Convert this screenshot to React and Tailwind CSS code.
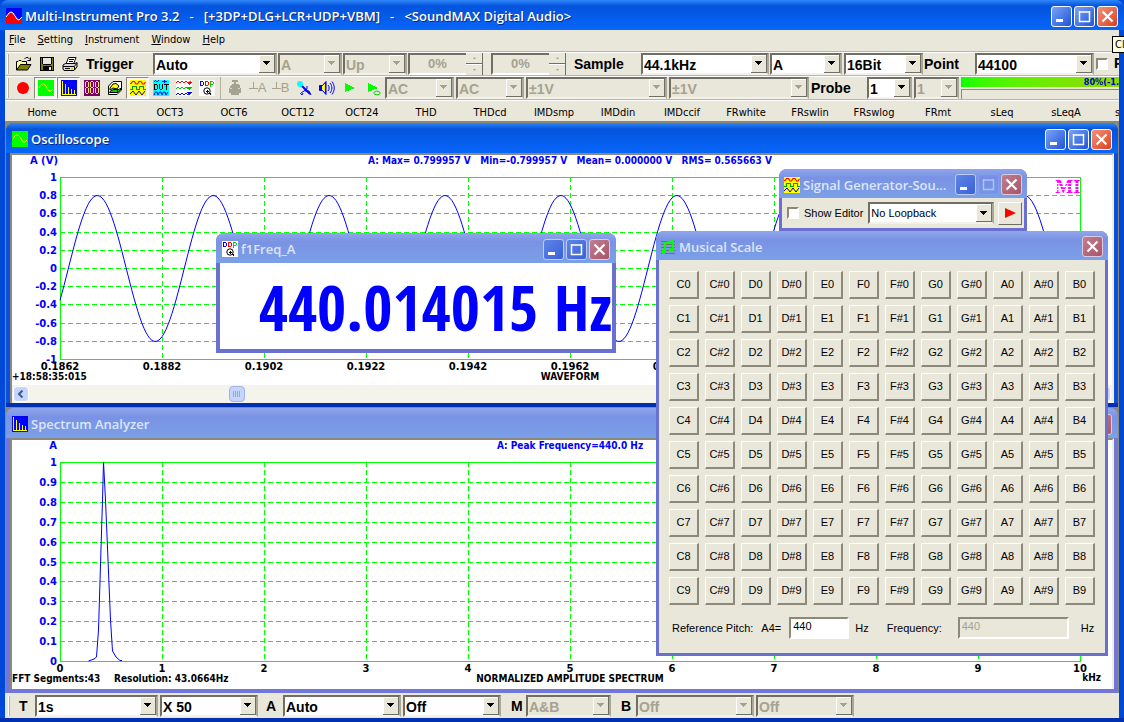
import React from "react";

const ui = "font-['DejaVu_Sans_Condensed','DejaVu_Sans',sans-serif]";
const sans = "font-['Liberation_Sans',Arial,sans-serif]";
const title = "font-['Open_Sans',sans-serif]";

/* ---------- icons ---------- */

const Svg = ({ children, size = 16, className = "" }) => (
  <svg width={size} height={size} viewBox="0 0 16 16" className={`block shrink-0 ${className}`} fill="none" aria-hidden="true" shapeRendering="crispEdges">
    {children}
  </svg>
);

const AppIcon = () => (
  <Svg>
    <rect width="16" height="16" fill="#0000ff" />
    <path d="M0 9L3 5L5 4L7 5L11 11L13 12L16 9V16H0Z" fill="#ff0000" shapeRendering="auto" />
    <path d="M0 9L3 5L5 4L7 5L11 11L13 12L16 9" stroke="#fff" shapeRendering="auto" />
  </Svg>
);
const ScopeIcon = () => (
  <Svg>
    <rect width="16" height="16" fill="#00ff00" />
    <path d="M1 8L2 6L4 4H6L8 6L9 8L11 11H13L15 9" stroke="#ffff00" shapeRendering="auto" />
  </Svg>
);
const SpectrumIcon = () => (
  <Svg>
    <rect width="16" height="16" fill="#0000ff" />
    <path d="M1.5 1V15M4.5 4V14M7.5 7V14M10.5 9V14M13.5 10V14M1 14.5H15" stroke="#ffff00" />
  </Svg>
);
const MeterIcon = () => (
  <Svg>
    <rect width="16" height="16" fill="#80006a" />
    <path d="M2 1.5H4M2 7.5H4M2 13.5H4M1.5 2V7M4.5 2V7M1.5 8V13M4.5 8V13M7 1.5H9M7 7.5H9M7 13.5H9M6.5 2V7M9.5 2V7M6.5 8V13M9.500 8V13M12 1.5H14M12 7.5H14M12 13.5H14M11.5 2V7M14.5 2V7M11.5 8V13M14.5 8V13" stroke="#ffe060" />
  </Svg>
);
const CubeIcon = () => (
  <Svg>
    <path d="M1.5 6L6 1.500H14.500V10L10 14.500H1.500Z" fill="#fff" stroke="#000" shapeRendering="auto" />
    <path d="M3 8L6 4L9 3.500L12 6L10 9L6 8L3 10Z" fill="#ffff00" stroke="#000" shapeRendering="auto" />
    <path d="M2.500 12.500L4 10.500L7 9.500H12L13.500 8V10L10.500 12.500Z" fill="#00e000" stroke="#000" shapeRendering="auto" />
    <path d="M10.500 13V9" stroke="#000" />
  </Svg>
);
const GeneratorIcon = () => (
  <Svg>
    <rect width="16" height="16" fill="#ffff00" />
    <path d="M0 3.500H1L2.500 1.500H4.500L6 4H7.500L9 1.500H11L12.500 4H14L15.500 2" stroke="#ff0000" strokeWidth="1.200" shapeRendering="auto" />
    <path d="M0 9.5H2.5V6.5H6.5V9.5H9.5V6.5H13.5V9.5H16" stroke="#00a000" />
    <path d="M0 14L3 11L6 15L9 11L12 15L15 11" stroke="#0000c0" shapeRendering="auto" />
  </Svg>
);
const DutIcon = () => (
  <Svg>
    <rect width="16" height="16" fill="#00ffff" />
    <path d="M1 1.5L2.500 .5L4 2L6 .5M9 1.500H14M11.500 0V3" stroke="#0000ff" />
    <path d="M1.500 4V10M1 4.500H3.500L4.500 5.500V8.500L3.500 9.500H1M6.500 4V9M7 9.500H9M9.500 4V9M11 4.500H16M13.500 4V10" stroke="#000" />
    <path d="M1 15L2.500 12L4 12L5 15L6.500 12H8L9 15L10.500 12H12L13 15L15 12" stroke="#0000ff" shapeRendering="auto" />
  </Svg>
);
const WavesIcon = () => (
  <Svg>
    <rect width="16" height="16" fill="#fff" />
    <path d="M0 3L2 1L4 3L6 1L8 3L10 1L12 3L15 1" stroke="#ff0000" shapeRendering="auto" />
    <path d="M0 9L2 7L4 9L6 7L8 9L10 7L12 9L15 7" stroke="#00c800" shapeRendering="auto" />
    <path d="M0 15L2 13L4 15L6 13L8 15L10 13L12 15L15 13" stroke="#0000ff" shapeRendering="auto" />
    <path d="M10 2H16L13 5Z" fill="#ff0000" />
    <path d="M10 7H16L13 10Z" fill="#00c800" />
    <path d="M10 12H16L13 15Z" fill="#0000ff" />
  </Svg>
);
const DdpIcon = () => (
  <Svg>
    <rect width="16" height="16" fill="#fff" />
    <path d="M1.500 1V6M2 1.500H3.500M2 5.500H3.500M4.500 2V5" stroke="#0000ff" />
    <path d="M6.500 1V6M7 1.500H8.500M7 5.500H8.500M9.500 2V5" stroke="#ff0000" />
    <path d="M11.500 1V7M12 1.500H14M12 4.500H14M14.500 2V4" stroke="#00d000" />
    <circle cx="8" cy="11" r="3.200" stroke="#000" shapeRendering="auto" />
    <path d="M6.500 11.500H10M8.500 9.500V13M10.500 13L12.500 15.500" stroke="#000" />
  </Svg>
);
const OpenIcon = () => (
  <Svg>
    <path d="M.5 14V5.500H2L3 4.500H5L6 5.500H10.500V8" fill="#ffff99" stroke="#000" shapeRendering="auto" />
    <path d="M.5 14L4.500 8.500H15L11.500 14Z" fill="#808000" stroke="#000" shapeRendering="auto" />
    <path d="M8.500 3L10 1.500H12L14 3.500M14.500 1.500V4.500H11.500" stroke="#000" shapeRendering="auto" />
  </Svg>
);
const SaveIcon = () => (
  <Svg>
    <rect x="1.500" y="1.500" width="13" height="13" fill="#808000" stroke="#000" />
    <rect x="4" y="2" width="8" height="6" fill="#e8e6da" />
    <path d="M3.500 2V8M12.500 2V8M4 8.500H12" stroke="#000" />
    <rect x="4" y="10" width="9" height="5" fill="#000" />
    <rect x="10" y="11" width="2" height="3" fill="#e8e6da" />
  </Svg>
);
const PrintIcon = () => (
  <Svg>
    <path d="M4 8L6.500 1.500H14L11.500 8" fill="#fff" stroke="#000" shapeRendering="auto" />
    <path d="M7 3.500H12M6.500 5.500H11" stroke="#000" />
    <path d="M1 9L3.500 7.500H13L15 6.500V11L12 14.500H2L1 13Z" fill="#d8d8d8" stroke="#000" shapeRendering="auto" />
    <path d="M1 10.500H12.500V14M12.500 10L15 7.500M3 12.500H8" stroke="#000" shapeRendering="auto" />
    <path d="M9 12.500H11" stroke="#d8d800" />
  </Svg>
);
const RecordIcon = () => (
  <Svg><circle cx="8" cy="8" r="6" fill="#ff0000" shapeRendering="auto" /></Svg>
);
const HydrantIcon = () => (
  <Svg>
    <path d="M7 2H5V0H11V2H9V4H11L13 6V8H14V13H12V15H4V13H2V8H3V6L5 4H7Z" fill="#a5a28f" />
    <path d="M3 8.500H5M11 8.500H13" stroke="#d8d5c4" />
  </Svg>
);
const ZeroIcon = ({ letter }) => (
  <span className={`flex items-center text-[13px] leading-4 text-[#a5a28f] ${sans}`}>
    <svg width="9" height="12" viewBox="0 0 9 12" shapeRendering="crispEdges" aria-hidden="true">
      <path d="M4.500 0V6M0 6.500H9" stroke="#a5a28f" />
    </svg>
    {letter}
  </span>
);
const MicIcon = () => (
  <Svg>
    <path d="M5 5L14 14" stroke="#0000ff" strokeWidth="2" shapeRendering="auto" />
    <path d="M11 6V9L6.500 12L4.500 13.500L6 15L7 13M9 11H13L15 15" stroke="#0000ff" shapeRendering="auto" />
    <circle cx="4" cy="4" r="3" fill="#00ffff" shapeRendering="auto" />
  </Svg>
);
const SpeakerIcon = () => (
  <Svg>
    <path d="M.5 5.500H3.500L7 1.500V14.500L3.500 10.500H.5Z" fill="#0000ff" stroke="#0000ff" shapeRendering="auto" />
    <path d="M3 6L6 3V13L3 10Z" fill="#ffff00" />
    <path d="M9 5C10.500 7 10.500 9 9 11M11 3C13.500 6 13.500 10 11 13M13 1.500C16 5.500 16 10.500 13 14.500" stroke="#0000ff" shapeRendering="auto" />
  </Svg>
);
const PlayIcon = ({ loop }) => (
  <Svg>
    <path d="M3 3L13 8L3 12Z" fill="#00ff00" />
    {loop && <ellipse cx="12" cy="13" rx="3.200" ry="1.800" fill="#e9e6da" stroke="#00e000" shapeRendering="auto" />}
  </Svg>
);
const MusicIcon = () => (
  <Svg>
    <path d="M1 2.500H15M1 5.500H15M1 8.500H15M1 11.500H15M1 14.500H15" stroke="#707070" />
    <path d="M5 13V4L13 2V11" stroke="#00ff00" strokeWidth="2" shapeRendering="auto" />
    <ellipse cx="3.500" cy="13" rx="2.500" ry="2" fill="#00ff00" />
    <ellipse cx="11.500" cy="11" rx="2.500" ry="2" fill="#00ff00" />
  </Svg>
);

/* ---------- window chrome ---------- */

const ControlGlyph = ({ kind }) => (
  <svg width="19" height="19" viewBox="0 0 19 19" fill="none" stroke="#fff" aria-hidden="true">
    {kind === "minimize" && <path d="M4 13.500H11" strokeWidth="3" />}
    {kind === "maximize" && <path d="M4.500 4V14.500H14.500V4M4 5H15" strokeWidth="1.500" />}
    {kind === "close" && <path d="M4.500 4.500L14.500 14.500M14.500 4.500L4.500 14.500" strokeWidth="2.200" />}
  </svg>
);

const controlTone = {
  active: "border-white bg-linear-to-br from-[#7aa2f5] to-[#2351d8]",
  inactive: "border-[#b9cdf7] bg-linear-to-br from-[#5f86e6] to-[#3a60d6]",
  disabled: "border-[#93aef0] bg-[#6c8ce6] opacity-40",
  closeActive: "border-white bg-linear-to-br from-[#f09078] to-[#dc3c14]",
  closeInactive: "border-[#dccbe0] bg-linear-to-br from-[#bf7f92] to-[#a85566]",
};

const Control = ({ kind, tone, label }) => (
  <button type="button" aria-label={label} className={`flex size-[21px] items-center justify-center rounded-[3px] border ${controlTone[tone]}`}>
    <ControlGlyph kind={kind} />
  </button>
);

const Controls = ({ active, closeOnly, noMaximize }) => (
  <div className="flex shrink-0 gap-0.5">
    {!closeOnly && <Control kind="minimize" label="Minimize" tone={active ? "active" : "inactive"} />}
    {!closeOnly && <Control kind="maximize" label="Maximize" tone={noMaximize ? "disabled" : active ? "active" : "inactive"} />}
    <Control kind="close" label="Close" tone={active ? "closeActive" : "closeInactive"} />
  </div>
);

const TitleBar = ({ icon, text, active, box = "h-[30px] px-1.5", ...rest }) => (
  <header
    className={`flex items-center rounded-t-lg pt-0.5 ${box} ${
      active
        ? "bg-linear-to-b from-[#2f86f8] via-[#0453dc] via-20% to-[#0866fb] text-white"
        : "bg-linear-to-b from-[#8fa6ec] via-[#7a92e4] via-30% to-[#7aa0e8] text-[#dde6fc]"
    }`}
  >
    {icon}
    <h2 className={`ml-[3px] mr-2 min-w-0 flex-1 truncate whitespace-pre text-[13px] font-semibold leading-5 ${title} ${active ? "[text-shadow:1px_1px_0_#0a2a80]" : ""}`}>{text}</h2>
    <Controls active={active} {...rest} />
  </header>
);

/* ---------- form controls ---------- */

const Arrow = ({ disabled }) => (
  <span className="pointer-events-none absolute inset-y-[2px] right-[2px] flex w-4 items-center justify-center border-b border-r border-[#716f64] bg-[#e9e6da] shadow-[inset_1px_1px_0_#fff]">
    <svg width="7" height="4" viewBox="0 0 7 4" aria-hidden="true" shapeRendering="crispEdges">
      <path d="M0 0H7L3.500 4Z" fill={disabled ? "#a5a28f" : "#000"} />
    </svg>
  </span>
);

const Combo = ({ label, value, disabled, className = "", small }) => (
  <span className={`relative flex h-[22px] shrink-0 ${className}`}>
    <select
      aria-label={label}
      disabled={disabled}
      defaultValue={value}
      className={`size-full appearance-none border-2 border-b-[#f4f2e8] border-l-[#716f64] border-r-[#aca899] border-t-[#716f64] pl-px pr-4 opacity-100 outline-none ${sans} ${
        small ? "text-[11px]" : "text-[14px] font-bold"
      } ${disabled ? "bg-[#e9e6da] text-[#a5a28f]" : "bg-white text-black"}`}
    >
      <option>{value}</option>
    </select>
    <Arrow disabled={disabled} />
  </span>
);

const Spin = ({ label }) => (
  <span className="relative flex h-[22px] w-[75px] shrink-0">
    <input
      aria-label={label}
      disabled
      defaultValue="0%"
      className={`size-full border-2 border-b-white border-l-[#716f64] border-r-[#716f64] border-t-[#716f64] bg-[#e9e6da] pr-4 text-center text-[13px] font-bold text-[#a5a28f] ${sans}`}
    />
    <span className="absolute inset-y-0 right-0 flex w-[17px] flex-col border-r border-[#716f64] bg-[#e9e6da]">
      <span className="flex flex-1 items-center justify-center border-b border-[#716f64]">
        <svg width="3" height="2" aria-hidden="true"><path d="M0 2H3L1.500 0Z" fill="#a5a28f" /></svg>
      </span>
      <span className="flex flex-1 items-center justify-center border-t border-white">
        <svg width="3" height="2" aria-hidden="true"><path d="M0 0H3L1.500 2Z" fill="#a5a28f" /></svg>
      </span>
    </span>
  </span>
);

const Caption = ({ children, className = "" }) => (
  <span className={`shrink-0 text-[14px] font-bold leading-5 text-black ${sans} ${className}`}>{children}</span>
);

const Tool = ({ label, pressed, children }) => (
  <button
    type="button"
    aria-label={label}
    className={`flex h-[22px] w-[23px] shrink-0 items-center justify-center border ${
      pressed ? "border-b-white border-l-[#8c897a] border-r-white border-t-[#8c897a] bg-[#f6f4ec]" : "border-transparent"
    }`}
  >
    {children}
  </button>
);

const Grip = () => <span className="mx-0.5 h-5 w-0.5 shrink-0 border-l border-white bg-[#b5b2a0]" />;

const rowClass = "flex items-center overflow-hidden border-t border-[#b9b79a] shadow-[inset_0_1px_0_#fff]";
const wellClass = "border-2 border-b-white border-l-[#8c897a] border-r-white border-t-[#8c897a]";

/* ---------- charts ---------- */

const chartText = "font-['DejaVu_Sans',Verdana,sans-serif] text-[10px] font-bold";
const chartNote = "font-['DejaVu_Sans_Condensed','DejaVu_Sans',sans-serif] text-[10px] font-bold";

const range = (n) => Array.from({ length: n }, (_, i) => i);

const Grid = ({ top, height, rows }) => (
  <g stroke="#00ff00" fill="none" shapeRendering="crispEdges">
    {range(9).map((i) => (
      <path key={`v${i}`} d={`M${150.5 + i * 102} ${top}V${top + height}`} strokeDasharray="5 3" />
    ))}
    {range(rows - 1).map((i) => (
      <path key={`h${i}`} d={`M48 ${top + Math.round(((i + 1) * height) / rows)}.5H1068`} strokeDasharray="5 3" />
    ))}
    <rect x="48.5" y={top + 0.5} width="1020" height={height} />
  </g>
);

const wave = range(511)
  .map((i) => {
    const x = 48 + i * 2;
    const y = 113.5 - 73 * Math.cos((2 * Math.PI * (x - 85.3)) / 115.9);
    return `${x} ${y.toFixed(1)}`;
  })
  .join("L");

const scopeY = ["1", "0.8", "0.6", "0.4", "0.2", "0", "-0.2", "-0.4", "-0.6", "-0.8", "-1"];
const spectrumY = ["1", "0.9", "0.8", "0.7", "0.6", "0.5", "0.4", "0.3", "0.2", "0.1", "0"];
const scopeX = ["0.1862", "0.1882", "0.1902", "0.1922", "0.1942", "0.1962", "0.1982", "0.2002", "0.2022", "0.2042", "0.2062"];

const ScopeChart = () => (
  <svg viewBox="0 0 1100 230" className="block w-full" role="img" aria-label="Oscilloscope waveform">
    <Grid top={22} height={182} rows={10} />
    <path d={`M${wave}`} fill="none" stroke="#0000ff" />
    <g className={chartText} fill="#0000ff" textAnchor="end">
      <text x="46" y="9">A (V)</text>
      {scopeY.map((t, i) => (
        <text key={t} x="45" y={26 + Math.round(i * 18.2)}>{t}</text>
      ))}
    </g>
    <text x="558" y="9" className={`${chartNote} whitespace-pre`} fill="#0000ff" textAnchor="middle">
      {"A: Max= 0.799957 V   Min=-0.799957 V   Mean= 0.000000 V   RMS= 0.565663 V"}
    </text>
    <g className={chartText} textAnchor="middle">
      {scopeX.map((t, i) => (
        <text key={t} x={48 + i * 102} y="215">{t}</text>
      ))}
    </g>
    <text x="0" y="225" className={chartNote}>+18:58:35:015</text>
    <text x="558" y="225" className={chartNote} textAnchor="middle">WAVEFORM</text>
    <text x="1056" y="38" textAnchor="middle" fill="#ff00ff" className="font-['Liberation_Serif',serif] text-[19px] font-bold">MI</text>
    <path d="M1040 28.500H1067M1040 31.500H1067M1040 34.500H1067" stroke="#fff" shapeRendering="crispEdges" />
  </svg>
);

const SpectrumChart = () => (
  <svg viewBox="0 0 1100 249" className="block w-full" role="img" aria-label="Normalized amplitude spectrum">
    <Grid top={22} height={199} rows={10} />
    <path d="M76.500 221L82 219L84.500 217L86.500 190L90.500 60L91.500 22L93.500 60L98.500 180L100.500 211L104 217L108 220.500H110" fill="none" stroke="#0000ff" />
    <g className={chartText} fill="#0000ff" textAnchor="end">
      <text x="45" y="9">A</text>
      {spectrumY.map((t, i) => (
        <text key={t} x="45" y={26 + Math.round(i * 19.9)}>{t}</text>
      ))}
    </g>
    <text x="558" y="9" className={chartNote} fill="#0000ff" textAnchor="middle">A: Peak Frequency=440.0 Hz</text>
    <g className={chartText} textAnchor="middle">
      {range(11).map((i) => (
        <text key={i} x={48 + i * 102} y="232">{i}</text>
      ))}
    </g>
    <g className={chartNote}>
      <text x="0" y="242">FFT Segments:43</text>
      <text x="102" y="242">Resolution: 43.0664Hz</text>
      <text x="558" y="242" textAnchor="middle">NORMALIZED AMPLITUDE SPECTRUM</text>
      <text x="1089" y="241" textAnchor="end">kHz</text>
    </g>
  </svg>
);

/* ---------- windows ---------- */

const OscilloscopeWindow = () => (
  <section className="rounded-t-lg bg-[#0b50dc]">
    <TitleBar active icon={<ScopeIcon />} text="Oscilloscope" />
    <div className="mx-1">
      <div className="border-x-2 border-t-2 border-l-[#8c897a] border-r-[#f0eee2] border-t-[#8c897a] bg-white">
        <ScopeChart />
        <div className="flex h-[18px] items-center bg-[#f4f3ec] px-px">
          <button type="button" aria-label="Scroll left" className="flex size-4 items-center justify-center rounded-sm border border-white bg-[#c6d5fb]">
            <svg width="8" height="8" viewBox="0 0 8 8" aria-hidden="true"><path d="M5.500 .5L2 4L5.500 7.500" fill="none" stroke="#3c5a94" strokeWidth="2" /></svg>
          </button>
          <div className="flex flex-1 pl-[18.2%]">
            <div className="flex size-4 items-center justify-center gap-px rounded-sm border border-[#9db4e8] bg-[#c6d5fb]">
              {range(4).map((i) => <span key={i} className="h-1.5 w-px bg-[#8ba6e8]" />)}
            </div>
          </div>
          <button type="button" aria-label="Scroll right" className="flex size-4 items-center justify-center rounded-sm border border-white bg-[#c6d5fb]">
            <svg width="8" height="8" viewBox="0 0 8 8" aria-hidden="true"><path d="M2.500 .5L6 4L2.500 7.500" fill="none" stroke="#3c5a94" strokeWidth="2" /></svg>
          </button>
        </div>
      </div>
    </div>
    <div className="h-1 bg-[#0030b0]" />
  </section>
);

const SpectrumWindow = () => (
  <section className="mt-px rounded-t-lg bg-[#7276d8]">
    <TitleBar icon={<SpectrumIcon />} text="Spectrum Analyzer" />
    <div className="mx-1">
      <div className="border-x-2 border-t-2 border-l-[#8c897a] border-r-[#f0eee2] border-t-[#8c897a] bg-white">
        <SpectrumChart />
      </div>
    </div>
    <div className="h-1" />
  </section>
);

const FrequencyWindow = () => (
  <section className="absolute left-[210px] top-[110px] w-[400px] rounded-t-lg bg-[#6a70d0] pb-1">
    <TitleBar icon={<DdpIcon />} text="f1Freq_A" />
    <div className="mx-1 flex h-[86px] items-center justify-end overflow-hidden bg-white">
      <output className="whitespace-nowrap font-['Open_Sans_Condensed','Roboto_Condensed','Liberation_Sans',sans-serif] text-[63px] font-bold leading-none text-[#0000ff]">440.014015 Hz</output>
    </div>
  </section>
);

const GeneratorWindow = () => (
  <section className="absolute left-[773px] top-[46px] w-[248px] rounded-t-lg bg-[#6a70d0] pb-[3px]">
    <TitleBar box="h-[29px] pl-[5px] pr-[5px]" icon={<GeneratorIcon />} text="Signal Generator-Sound Card" noMaximize />
    <div className="mx-[3px] flex h-[30px] items-center bg-[#e9e6da] pl-[5px] pr-0.5">
      <label className={`flex items-center gap-[5px] whitespace-nowrap text-[11px] ${sans}`}>
        <input type="checkbox" className={`size-3 appearance-none bg-white ${wellClass}`} />
        Show Editor
      </label>
      <Combo small label="Loopback" value="No Loopback" className="ml-[5px] min-w-0 flex-1" />
      <button type="button" aria-label="Start generator" className="ml-1 flex h-[23px] w-6 items-center justify-center border border-b-[#716f64] border-l-white border-r-[#716f64] border-t-white">
        <svg width="11" height="10" viewBox="0 0 11 10" aria-hidden="true"><path d="M0 0L11 5L0 10Z" fill="#ff0000" /></svg>
      </button>
    </div>
  </section>
);

const notes = ["C", "C#", "D", "D#", "E", "F", "F#", "G", "G#", "A", "A#", "B"];

const ScaleWindow = () => (
  <section className="absolute left-[650px] top-[108px] w-[452px] rounded-t-lg bg-[#6a70d0] pb-[3px]">
    <TitleBar box="h-[29px] pl-1 pr-[5px]" icon={<MusicIcon />} text="Musical Scale" closeOnly />
    <div className={`mx-[3px] bg-[#e9e6da] px-2.5 pb-3.5 pt-[11px] text-[11px] ${sans}`}>
      <div className="grid grid-cols-12 gap-1.5">
        {range(10).map((octave) =>
          notes.map((note) => (
            <button key={note + octave} type="button" className="h-7 border-b-2 border-l border-r-2 border-t border-b-[#8c897a] border-l-white border-r-[#8c897a] border-t-white text-center">
              {note}
              {octave}
            </button>
          )),
        )}
      </div>
      <div className="mt-3 flex items-center whitespace-nowrap pl-[3px]">
        <span>Reference Pitch:</span>
        <label htmlFor="pitch" className="ml-2">A4=</label>
        <input id="pitch" defaultValue="440" className={`ml-2 h-[22px] w-[60px] bg-white pb-1 pl-0.5 ${wellClass}`} />
        <span className="ml-1.5">Hz</span>
        <label htmlFor="frequency" className="ml-[18px]">Frequency:</label>
        <input id="frequency" disabled defaultValue="440" className={`ml-4 h-[22px] w-[111px] bg-transparent pb-1 pl-0.5 text-[#a5a28f] ${wellClass}`} />
        <span className="ml-3">Hz</span>
      </div>
    </div>
  </section>
);

/* ---------- application ---------- */

const menus = ["File", "Setting", "Instrument", "Window", "Help"];
const presets = ["Home", "OCT1", "OCT3", "OCT6", "OCT12", "OCT24", "THD", "THDcd", "IMDsmp", "IMDdin", "IMDccif", "FRwhite", "FRswlin", "FRswlog", "FRmt", "sLeq", "sLeqA", "sLeqC"];

export default function App() {
  return (
    <main className="relative flex min-h-screen flex-col overflow-hidden bg-[#0048d8] text-black">
      <TitleBar
        active
        icon={<AppIcon />}
        text={"Multi-Instrument Pro 3.2   -   [+3DP+DLG+LCR+UDP+VBM]   -   <SoundMAX Digital Audio>"}
      />
      <div className="mx-[5px] flex flex-1 flex-col bg-[#e9e6da]">
        <nav className={`flex h-[21px] items-center gap-3 pl-1 pb-0.5 text-[11px] ${ui}`}>
          {menus.map((m) => (
            <button key={m} type="button" className="leading-4">
              <span className="underline">{m[0]}</span>
              {m.slice(1)}
            </button>
          ))}
        </nav>

        <div className={`h-6 gap-px ${rowClass}`}>
          <Grip />
          <div className="flex">
            <Tool label="Open"><OpenIcon /></Tool>
            <Tool label="Save"><SaveIcon /></Tool>
            <Tool label="Print"><PrintIcon /></Tool>
          </div>
          <Caption className="ml-1 w-[66px]">Trigger</Caption>
          <Combo label="Trigger mode" value="Auto" className="w-[124px]" />
          <Combo label="Trigger source" value="A" disabled className="w-16" />
          <Combo label="Trigger edge" value="Up" disabled className="w-16" />
          <Spin label="Trigger level" />
          <span className="w-1.5 shrink-0" />
          <Spin label="Trigger delay" />
          <Caption className="ml-[7px] w-[66px]">Sample</Caption>
          <Combo label="Sampling rate" value="44.1kHz" className="w-32" />
          <Combo label="Channels" value="A" className="w-[72px]" />
          <Combo label="Bit resolution" value="16Bit" className="ml-px w-[79px]" />
          <Caption className="w-[50px]">Point</Caption>
          <Combo label="Record length" value="44100" className="w-[119px]" />
          <label className={`ml-px flex shrink-0 items-center gap-1.5 text-[14px] font-bold ${sans}`}>
            <input type="checkbox" className={`size-3 appearance-none bg-white ${wellClass}`} />
            P
          </label>
        </div>

        <div className={`h-6 ${rowClass}`}>
          <Grip />
          <div className="flex shrink-0">
            <Tool label="Record"><RecordIcon /></Tool>
            <Tool label="Oscilloscope" pressed><ScopeIcon /></Tool>
            <Tool label="Spectrum analyzer" pressed><SpectrumIcon /></Tool>
            <Tool label="Multimeter"><MeterIcon /></Tool>
            <Tool label="Spectrum 3D plot"><CubeIcon /></Tool>
            <Tool label="Signal generator" pressed><GeneratorIcon /></Tool>
            <Tool label="Device test plan"><DutIcon /></Tool>
            <Tool label="Data logger"><WavesIcon /></Tool>
            <Tool label="Derived data points"><DdpIcon /></Tool>
            <span className="mx-0.5 w-px bg-[#b5b2a0]" />
            <Tool label="Calibrate"><HydrantIcon /></Tool>
            <Tool label="Zero A"><ZeroIcon letter="A" /></Tool>
            <Tool label="Zero B"><ZeroIcon letter="B" /></Tool>
            <Tool label="Input device"><MicIcon /></Tool>
            <Tool label="Output device"><SpeakerIcon /></Tool>
            <Tool label="Run"><PlayIcon /></Tool>
            <Tool label="Run loop"><PlayIcon loop /></Tool>
          </div>
          <div className="ml-px flex min-w-0 flex-1 items-center gap-0.5">
            <Combo label="Coupling A" value="AC" disabled className="w-[69px]" />
            <Combo label="Coupling B" value="AC" disabled className="w-[68px]" />
            <Combo label="Range A" value="±1V" disabled className="w-[141px]" />
            <Combo label="Range B" value="±1V" disabled className="w-[140px]" />
            <Caption className="w-[54px]">Probe</Caption>
            <Combo label="Probe A" value="1" className="w-[45px]" />
            <Combo label="Probe B" value="1" disabled className="w-[45px]" />
            <div className="flex h-[22px] min-w-0 flex-1 flex-col gap-0.5">
              <div className="flex h-2.5 justify-end overflow-hidden bg-linear-to-r from-[#00ff00] to-[#90d800]">
                <span className="text-[9px] font-bold leading-[10px] text-[#0000c0] font-['DejaVu_Sans_Condensed','DejaVu_Sans',sans-serif]">80%(-1.</span>
              </div>
              <div className="h-2.5 border-l border-t border-[#8c897a]" />
            </div>
          </div>
        </div>

        <nav className={`h-[22px] pl-[5px] text-[11px] ${rowClass} ${ui}`}>
          {presets.map((p) => (
            <button key={p} type="button" className="w-16 shrink-0 pt-1 text-center leading-4">{p}</button>
          ))}
        </nav>

        <div className="relative flex-1 border-x border-t-2 border-x-[#8c897a] border-t-[#8c897a] bg-[#8c897a]">
          <OscilloscopeWindow />
          <SpectrumWindow />
          <FrequencyWindow />
          <GeneratorWindow />
          <ScaleWindow />
        </div>

        <footer className="flex h-[25px] shrink-0 items-center gap-0.5 overflow-hidden pl-px">
          <Grip />
          <Caption className="ml-[5px] w-3.5">T</Caption>
          <Combo label="Sweep time" value="1s" className="w-[123px]" />
          <Combo label="Horizontal zoom" value="X 50" className="w-[98px]" />
          <Caption className="ml-1.5 w-[15px]">A</Caption>
          <Combo label="View A" value="Auto" className="w-[118px]" />
          <Combo label="Overlay A" value="Off" className="w-[98px]" />
          <Caption className="ml-2 w-[13px]">M</Caption>
          <Combo label="View mode" value="A&B" disabled className="w-[85px]" />
          <Caption className="ml-2 w-[13px]">B</Caption>
          <Combo label="View B" value="Off" disabled className="w-[118px]" />
          <Combo label="Overlay B" value="Off" disabled className="w-[98px]" />
        </footer>
      </div>
      <div className="h-1 bg-[#0030b0]" />
      <span role="tooltip" className={`absolute right-0 top-9 h-[17px] w-3 overflow-hidden whitespace-nowrap border border-r-0 border-black bg-[#ffffe1] pl-0.5 text-[11px] leading-[15px] ${ui}`}>
        Close
      </span>
    </main>
  );
}
